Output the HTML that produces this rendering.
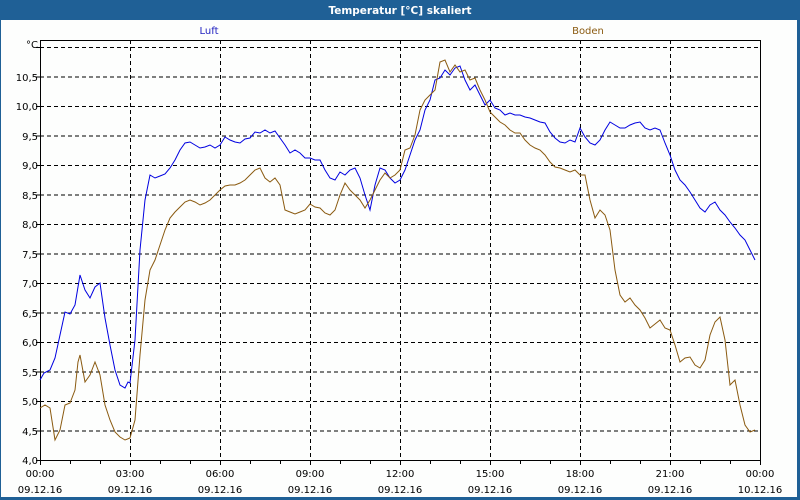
<!DOCTYPE html>
<html><head><meta charset="utf-8"><style>
html,body{margin:0;padding:0;width:800px;height:500px;overflow:hidden;background:#fdfefd;}
svg{display:block}
text{font-family:"DejaVu Sans","Liberation Sans",sans-serif;font-size:10px;fill:#000}
</style></head><body>
<svg width="800" height="500" viewBox="0 0 800 500">
<rect x="0" y="0" width="800" height="500" fill="#fdfefd"/>
<rect x="0" y="0" width="800" height="20" fill="#1f6096"/>
<rect x="0" y="0" width="1" height="500" fill="#1f6096"/>
<rect x="797" y="0" width="3" height="500" fill="#1f6096"/>
<rect x="0" y="497" width="800" height="3" fill="#1f6096"/>
<text x="400" y="14" text-anchor="middle" style="font-weight:bold;fill:#fff;font-size:10.5px">Temperatur [°C] skaliert</text>
<text x="209" y="34" text-anchor="middle" style="fill:#2020c0">Luft</text>
<text x="588" y="34" text-anchor="middle" style="fill:#8a5a10">Boden</text>
<g stroke="#000" stroke-width="1" stroke-dasharray="4,3" fill="none">
<path d="M40 47.5H760M40 77H760M40 106.5H760M40 136H760M40 165.5H760M40 195H760M40 224.5H760M40 254H760M40 283.5H760M40 313H760M40 342.5H760M40 372H760M40 401.5H760M40 431H760"/>
<path d="M130.5 40V460M220.5 40V460M310.5 40V460M400.5 40V460M490.5 40V460M580.5 40V460M670.5 40V460"/>
</g>
<path d="M40.5 40.5H760.5V460.5H40.5Z" fill="none" stroke="#000" stroke-width="1"/>
<path d="M40.5 460V465M70.5 460V464M100.5 460V464M130.5 460V465M160.5 460V464M190.5 460V464M220.5 460V465M250.5 460V464M280.5 460V464M310.5 460V465M340.5 460V464M370.5 460V464M400.5 460V465M430.5 460V464M460.5 460V464M490.5 460V465M520.5 460V464M550.5 460V464M580.5 460V465M610.5 460V464M640.5 460V464M670.5 460V465M700.5 460V464M730.5 460V464M760.5 460V465M36 47.5H40M36 77H40M36 106.5H40M36 136H40M36 165.5H40M36 195H40M36 224.5H40M36 254H40M36 283.5H40M36 313H40M36 342.5H40M36 372H40M36 401.5H40M36 431H40M36 460.5H40" stroke="#000" fill="none"/>
<g text-anchor="end">
<text x="38" y="48">°C</text><text x="38" y="81">10,5</text><text x="38" y="110">10,0</text><text x="38" y="140">9,5</text><text x="38" y="169">9,0</text><text x="38" y="199">8,5</text><text x="38" y="228">8,0</text><text x="38" y="258">7,5</text><text x="38" y="287">7,0</text><text x="38" y="317">6,5</text><text x="38" y="346">6,0</text><text x="38" y="376">5,5</text><text x="38" y="405">5,0</text><text x="38" y="435">4,5</text><text x="38" y="464">4,0</text>
</g>
<g text-anchor="middle">
<text x="40" y="477">00:00</text><text x="40" y="493">09.12.16</text>
<text x="130" y="477">03:00</text><text x="130" y="493">09.12.16</text>
<text x="220" y="477">06:00</text><text x="220" y="493">09.12.16</text>
<text x="310" y="477">09:00</text><text x="310" y="493">09.12.16</text>
<text x="400" y="477">12:00</text><text x="400" y="493">09.12.16</text>
<text x="490" y="477">15:00</text><text x="490" y="493">09.12.16</text>
<text x="580" y="477">18:00</text><text x="580" y="493">09.12.16</text>
<text x="670" y="477">21:00</text><text x="670" y="493">09.12.16</text>
<text x="760" y="477">00:00</text><text x="760" y="493">10.12.16</text>
</g>
<polyline fill="none" stroke="#0000e0" stroke-width="1" points="40,380 44,373 50,370 55,358 60,335 65,312 70,314 75,305 80,275 85,290 90,298 95,287 100,283 105,318 110,345 115,370 120,385 125,388 128,382 130,383 135,340 140,250 145,200 150,175 155,178 160,176 165,174 170,168 175,160 180,150 185,143 190,142 195,145 200,148 205,147 210,145 215,148 220,145 225,137 230,140 235,142 240,143 245,139 250,138 255,132 260,133 265,130 270,133 275,131 280,138 285,145 290,153 295,150 300,153 305,158 310,158 315,160 320,160 325,170 330,178 335,180 340,172 345,175 350,170 355,168 360,178 365,195 370,210 375,185 380,168 385,170 390,178 395,183 400,180 405,170 410,155 415,140 420,130 425,110 430,100 435,80 440,78 445,70 450,75 455,68 460,66 465,80 470,90 475,85 480,95 485,105 490,100 495,108 500,110 505,115 510,113 515,115 520,115 525,117 530,118 535,120 540,122 545,123 550,132 555,138 560,142 565,143 570,140 575,142 580,128 585,137 590,143 595,145 600,140 605,130 610,122 615,125 620,128 625,128 630,125 635,123 640,122 645,128 650,130 655,128 660,130 665,143 670,155 675,170 680,180 685,185 690,192 695,200 700,208 705,212 710,205 715,202 720,210 725,215 730,222 735,228 740,235 745,240 750,250 755,260"/>
<polyline fill="none" stroke="#8a5a10" stroke-width="1" points="40,408 45,405 50,408 55,440 60,430 65,405 70,403 75,390 78,362 80,355 85,382 90,375 95,362 100,375 105,405 110,420 115,432 120,437 125,440 130,438 135,420 140,355 145,300 150,270 155,260 160,245 165,230 170,218 175,212 180,207 185,202 190,200 195,202 200,205 205,203 210,200 215,195 220,190 225,186 230,185 235,185 240,183 245,180 250,175 255,170 260,168 265,178 270,182 275,178 280,185 285,210 290,212 295,214 300,212 305,210 310,204 315,207 320,208 325,213 330,215 335,210 340,195 345,183 350,190 355,195 360,200 365,208 370,200 375,190 380,180 385,173 390,178 395,175 400,170 405,150 410,148 415,135 420,110 425,100 430,95 435,90 440,62 445,60 450,72 455,65 460,72 465,70 470,80 475,78 480,90 485,100 490,112 495,117 500,122 505,125 510,130 515,133 520,133 525,140 530,145 535,148 540,150 545,155 550,162 555,167 560,168 565,170 570,172 575,170 580,175 585,175 590,200 595,218 600,210 605,215 610,230 615,270 620,295 625,302 630,298 635,305 640,310 645,318 650,328 655,324 660,320 665,328 670,330 675,345 680,362 685,358 690,357 695,365 700,368 705,360 710,335 715,322 720,317 725,340 730,385 735,380 740,405 745,425 750,432 755,430"/>
</svg>
</body></html>
